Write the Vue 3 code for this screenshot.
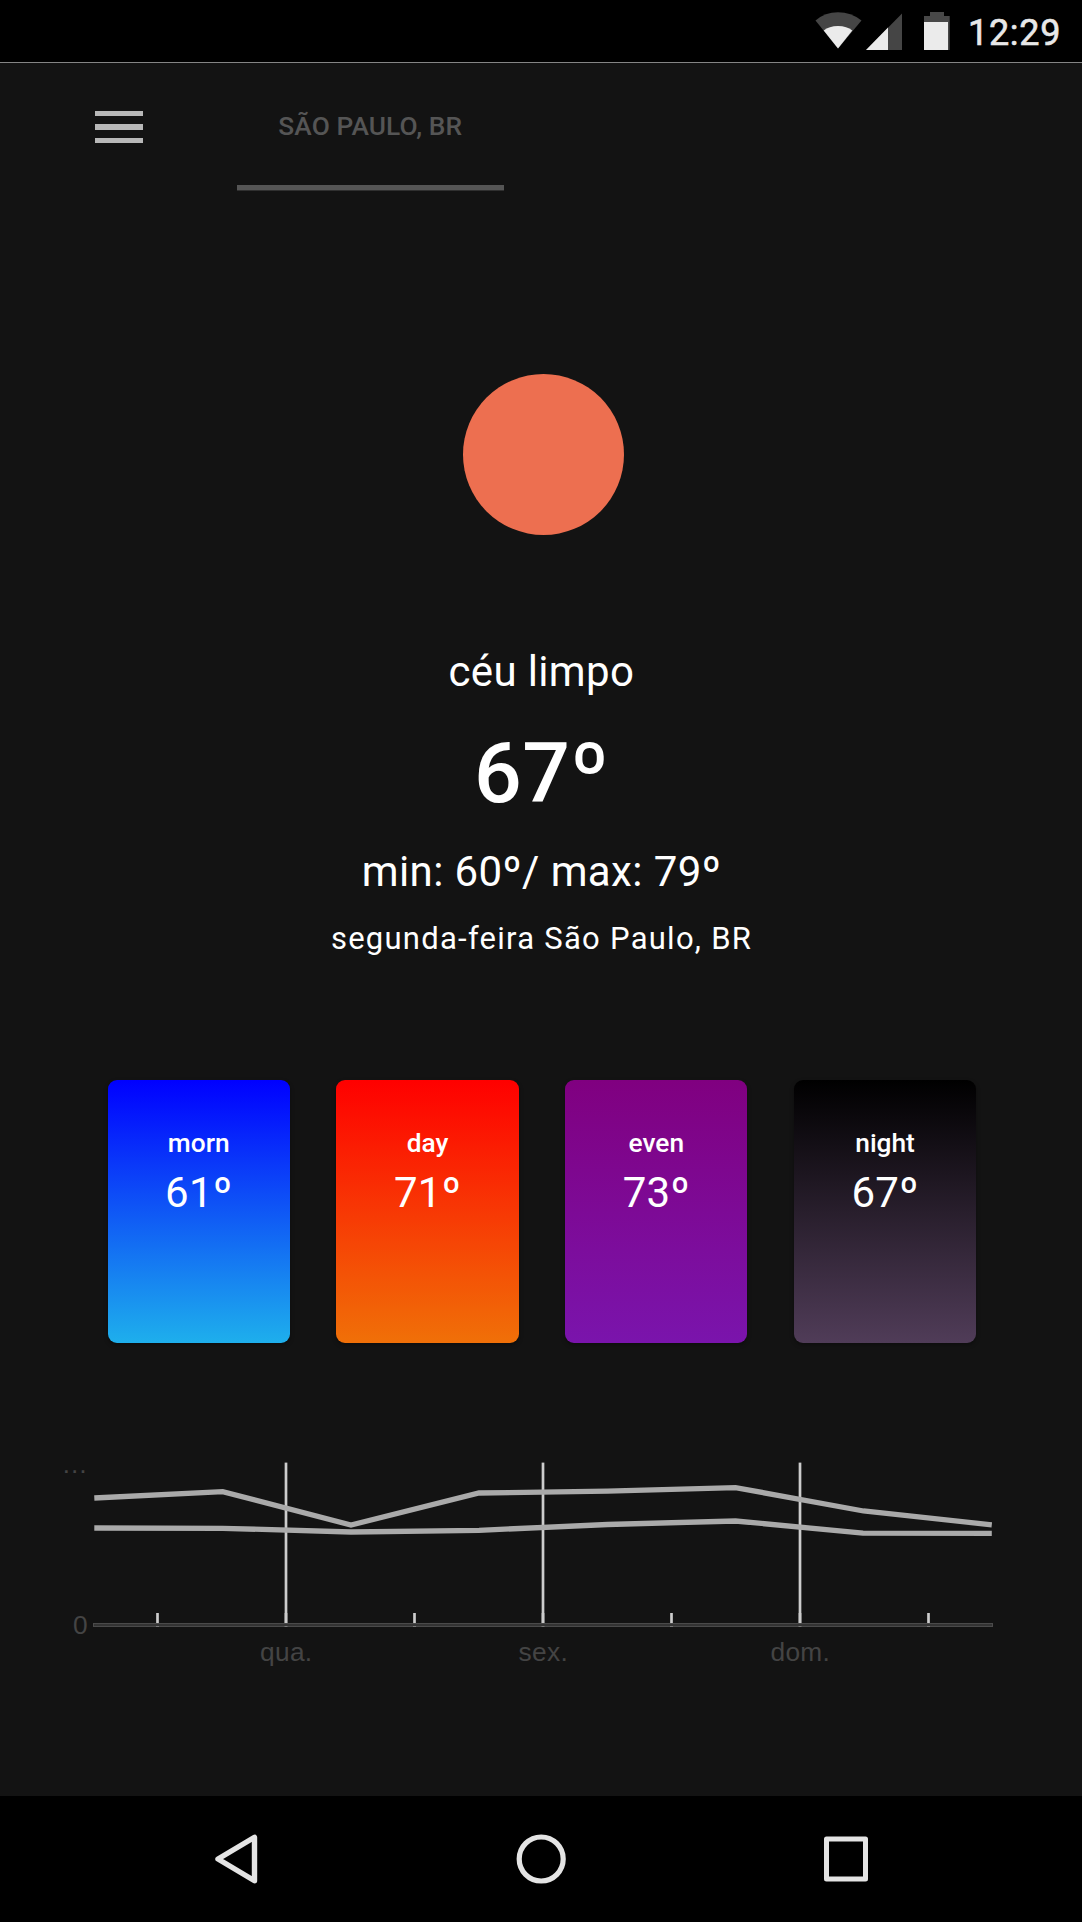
<script setup>
const periods = [
  { name: 'morn', temp: '61º' },
  { name: 'day', temp: '71º' },
  { name: 'even', temp: '73º' },
  { name: 'night', temp: '67º' },
]
const gridLines = [
  { x: 286, label: 'qua.' },
  { x: 543, label: 'sex.' },
  { x: 800, label: 'dom.' },
]
const ticks = [157.5, 286, 414.5, 543, 671.5, 800, 928.5]
const maxLine = '94.3,58 222.7,51.7 351,85 479,53 607.5,51.2 735.5,47.6 863.5,71 991.8,84.8'
const minLine = '94.3,88 222.7,88.3 351,92 479,90.3 607.5,84.5 735.5,81 863,93.1 991.8,93.4'
</script>

<template>
  <div class="screen">
    <div class="status">
      <svg class="status-icons" width="140" height="50" viewBox="813 0 140 50">
        <path d="M838 48.5 815.5 20.5Q825 12.3 838 12.3T861.5 20.5Z" fill="#454545" />
        <path d="M838 48.5 823.7 30.5Q829 26 838 26T852.3 30.5Z" fill="#ebebeb" />
        <path d="M866 50 902 13.5V50Z" fill="#454545" />
        <path d="M866 50 888 27.5V50Z" fill="#ebebeb" />
        <path d="M930 12h14v4h5.7v34H924V16h6Z" fill="#484848" />
        <path d="M924 22h24v28h-24z" fill="#ebebeb" />
      </svg>
      <span class="clock">12:29</span>
    </div>

    <header class="toolbar">
      <button class="menu" aria-label="Menu"><i></i><i></i><i></i></button>
      <div class="tab">SÃO PAULO, BR</div>
    </header>

    <main class="content">
      <div class="sun"></div>
      <p class="condition">céu limpo</p>
      <h1 class="temp">67º</h1>
      <p class="range">min: 60º/ max: 79º</p>
      <p class="place">segunda-feira São Paulo, BR</p>

      <div class="cards">
        <div v-for="p in periods" :key="p.name" class="card" :class="p.name">
          <span class="card-name">{{ p.name }}</span>
          <span class="card-temp">{{ p.temp }}</span>
        </div>
      </div>

      <svg class="chart" width="1082" height="240" viewBox="0 0 1082 240">
        <g stroke="#cccccc" stroke-width="2.7">
          <line v-for="g in gridLines" :key="g.x" :x1="g.x" :x2="g.x" y1="22.6" y2="186" />
          <line v-for="t in ticks" :key="t" :x1="t" :x2="t" y1="173" y2="186.5" />
        </g>
        <rect x="93" y="183" width="900" height="4" fill="#4a4a4a" />
        <rect x="94" y="184" width="898" height="2" fill="#333333" />
        <g fill="#777777">
          <rect v-for="t in ticks" :key="t" :x="t - 1.5" y="186" width="3" height="1" />
        </g>
        <g fill="none" stroke="#aaaaaa" stroke-width="5.3">
          <polyline :points="maxLine" />
          <polyline :points="minLine" />
        </g>
        <g class="axis-text">
          <text x="88" y="33" text-anchor="end">…</text>
          <text x="88" y="194" text-anchor="end">0</text>
          <text v-for="g in gridLines" :key="g.label" :x="g.x + 0.3" y="221" text-anchor="middle">{{ g.label }}</text>
        </g>
      </svg>
    </main>

    <nav class="navbar">
      <svg width="1082" height="126" viewBox="0 1796 1082 126" fill="none" stroke="#e4e4e4" stroke-linejoin="round">
        <path d="M218 1859 254.5 1837.3V1880.7Z" stroke-width="5.4" />
        <circle cx="541.2" cy="1859" r="22" stroke-width="5.2" />
        <rect x="826.5" y="1839" width="39" height="40" stroke-width="5" />
      </svg>
    </nav>
  </div>
</template>

<style>
body {
  background: #131313;
}
</style>

<style scoped>
.screen {
  display: flex;
  flex-direction: column;
  width: 1082px;
  height: 1922px;
  overflow: hidden;
  background: #131313;
  color: #fff;
  font-family: Roboto, sans-serif;
}
.status {
  box-sizing: border-box;
  display: flex;
  justify-content: flex-end;
  align-items: flex-start;
  height: 63px;
  padding-right: 21px;
  background: #000;
  border-bottom: 1px solid #858585;
}
.status-icons {
  flex: none;
  margin-right: 15px;
}
.clock {
  width: 93px;
  color: #e8e8e8;
  font-size: 36px;
  line-height: 67px;
  letter-spacing: 0.7px;
  text-align: right;
  -webkit-text-stroke: 0.6px #e8e8e8;
}
.toolbar {
  display: flex;
  height: 128px;
  padding-left: 94.6px;
}
.menu {
  display: flex;
  flex-direction: column;
  gap: 8px;
  width: 48.4px;
  margin: 47.5px 94.5px 0 0;
  padding: 0;
  border: 0;
  background: none;
}
.menu i {
  height: 5.5px;
  background: #b8b8b8;
}
.tab {
  box-sizing: border-box;
  width: 266.5px;
  height: 127px;
  border-bottom: 5px solid #555;
  box-shadow: 0 1px #303030;
  color: #555;
  font-size: 26.3px;
  font-weight: 500;
  line-height: 126px;
  letter-spacing: 0.08px;
  text-align: center;
  text-indent: -1px;
}
.content {
  display: flex;
  flex: 1;
  flex-direction: column;
  align-items: center;
}
.sun {
  width: 161px;
  height: 161px;
  margin: 182.5px 0 0 5px;
  border-radius: 50%;
  background: #ed6f50;
}
p,
h1 {
  margin: 0;
  white-space: nowrap;
}
.condition {
  margin-top: 107px;
  padding-left: 0.8px;
  font-size: 42px;
  line-height: 60px;
  letter-spacing: 0.35px;
}
.temp {
  margin-top: 22px;
  padding-left: 1.4px;
  font-size: 84px;
  font-weight: 500;
  line-height: 100px;
  letter-spacing: 0.5px;
}
.range {
  margin-top: 18px;
  padding-left: 1px;
  font-size: 42px;
  line-height: 60px;
  letter-spacing: 0.4px;
}
.place {
  margin-top: 12px;
  padding-left: 1px;
  font-size: 31px;
  line-height: 50px;
  letter-spacing: 1.26px;
}
.cards {
  display: flex;
  gap: 46.6px;
  margin: 116px 0 0 1.8px;
}
.card {
  display: flex;
  flex-direction: column;
  align-items: center;
  box-sizing: border-box;
  width: 182.2px;
  height: 263px;
  padding-top: 43px;
  border-radius: 9px;
  box-shadow: 0 2px 4px rgba(0, 0, 0, 0.35);
}
.card-name {
  font-size: 26.3px;
  font-weight: 500;
  line-height: 40px;
}
.card-temp {
  font-size: 42px;
  line-height: 60px;
  letter-spacing: 0.3px;
}
.morn {
  background: linear-gradient(#0000ff, #1eafec);
}
.day {
  background: linear-gradient(#ff0000, #f07008);
}
.even {
  background: linear-gradient(#800080, #7a14ac);
}
.night {
  background: linear-gradient(#000000, #503c58);
}
.chart {
  flex: none;
  margin-top: 97px;
}
.axis-text {
  fill: #444;
  font-family: "Liberation Sans", Arial, sans-serif;
  font-size: 26.3px;
  letter-spacing: 0.3px;
}
.navbar {
  flex: none;
  height: 126px;
  background: #000;
}
.navbar svg {
  display: block;
}
</style>
